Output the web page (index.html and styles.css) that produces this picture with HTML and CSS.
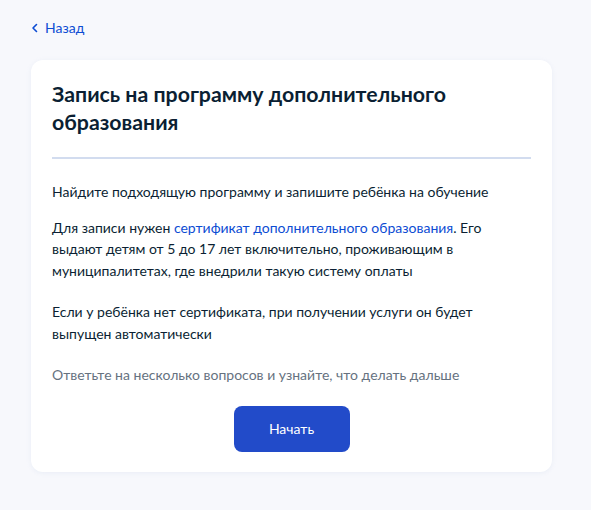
FILE: index.html
```html
<!DOCTYPE html>
<html lang="ru">
<head>
<meta charset="utf-8">
<link rel="stylesheet" href="styles.css">
</head>
<body>
<div class="page">
  <a class="back" href="#">
    <svg class="chev" width="8" height="10" viewBox="0 0 8 10"><path d="M5.5 1.5 L2 5 L5.5 8.5" fill="none" stroke="#0d4cd3" stroke-width="1.6" stroke-linecap="round" stroke-linejoin="round"/></svg>
    <span>Назад</span>
  </a>
  <div class="card">
    <h1 class="title">Запись на программу дополнительного образования</h1>
    <div class="divider"></div>
    <p class="text first">Найдите подходящую программу и запишите ребёнка на обучение</p>
    <p class="text second">Для записи нужен <a class="link" href="#">сертификат дополнительного образования</a>. Его выдают детям от 5 до 17 лет включительно, проживающим в муниципалитетах, где внедрили такую систему оплаты</p>
    <p class="text gap">Если у ребёнка нет сертификата, при получении услуги он будет выпущен автоматически</p>
    <p class="text muted">Ответьте на несколько вопросов и узнайте, что делать дальше</p>
    <div class="actions"><button class="btn">Начать</button></div>
  </div>
</div>
</body>
</html>
```
FILE: styles.css
```css
html, body {
  margin: 0;
  padding: 0;
  background: #f7f8fc;
  font-family: Lato, "Noto Sans", sans-serif;
  color: #0b1f33;
}
.page {
  padding: 18px 39px 38px 31px;
}
.back {
  display: flex;
  align-items: center;
  gap: 6px;
  height: 20px;
  color: #0d4cd3;
  text-decoration: none;
  font-size: 14px;
  line-height: 20px;
}
.chev { display: block; }
.card {
  margin-top: 22px;
  background: #fff;
  border-radius: 12px;
  padding: 20px 21px 20px 21px;
  box-shadow: 0 1px 4px rgba(230, 235, 245, 0.8);
}
.title {
  margin: 0;
  font-size: 21.3px;
  line-height: 28px;
  font-weight: 700;
  color: #0b1f33;
}
.divider {
  height: 2px;
  background: #d2dcef;
  margin-top: 21px;
  margin-bottom: 22px;
}
.text {
  margin: 12px 0 0 0;
  font-size: 14px;
  line-height: 21.5px;
  color: #0b1f33;
}
.text.first { margin-top: 0; }
.text.second { margin-top: 14px; }
.text.gap { margin-top: 20px; }
.text.muted { margin-top: 20px; color: #66727f; }
.link { color: #0d4cd3; text-decoration: none; }
.actions {
  display: flex;
  justify-content: center;
  margin-top: 20px;
}
.btn {
  width: 116px;
  height: 46px;
  border: none;
  border-radius: 8px;
  background: #224bc9;
  color: #fff;
  font-family: Lato, "Noto Sans", sans-serif;
  font-size: 14px;
}
```
